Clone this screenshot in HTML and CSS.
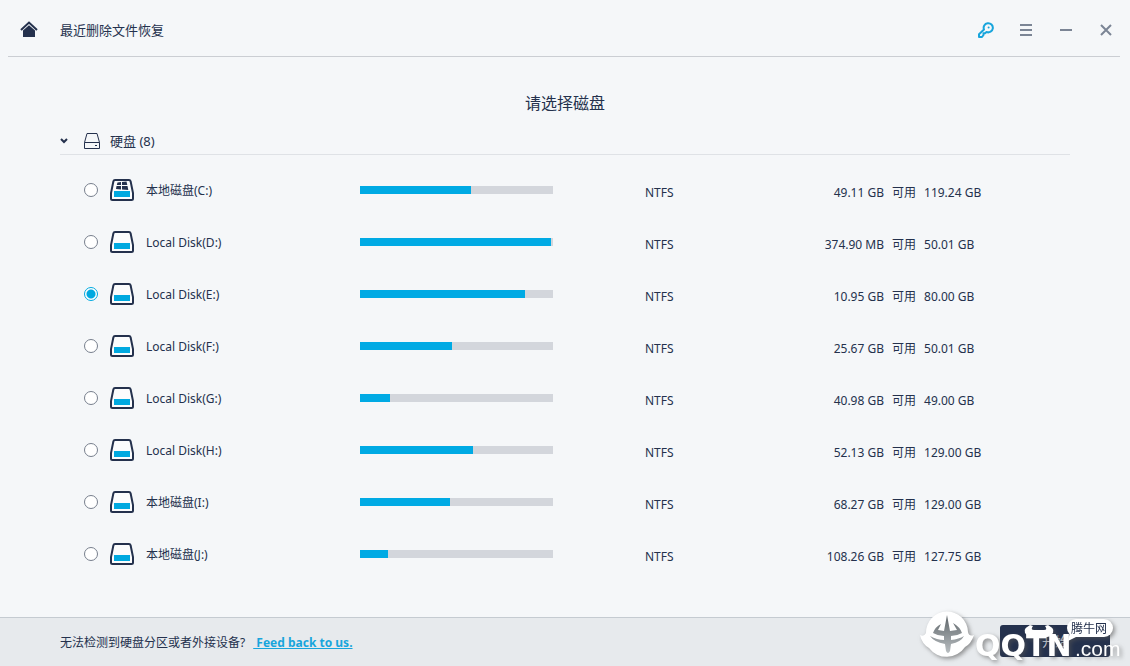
FILE: index.html
```
<!DOCTYPE html>
<html lang="zh-CN">
<head>
<meta charset="utf-8">
<title>最近删除文件恢复</title>
<link rel="stylesheet" href="styles.css">
</head>
<body>
<svg class="defs" aria-hidden="true">
  <symbol id="disk" viewBox="0 0 24 22">
    <path d="M5 1h14q1.300 0 1.600 1.200L23 14v5.500q0 1.500-1.500 1.500h-19Q1 21 1 19.500V14L3.400 2.200Q3.700 1 5 1z" fill="#fbfcfd" stroke="#24314d" stroke-width="2"/>
    <path d="M4 12h16v6H4z" fill="#00a9e0"/>
  </symbol>
</svg>
<div class="window">
  <header class="titlebar">
    <button class="tool home" aria-label="主页"><svg width="18" height="18" viewBox="0 0 18 18"><path d="M1 9 9 1.500l8 7.500" fill="none" stroke="#24314d" stroke-width="2"/><path d="M3 9.500 9 4.300 15 9.500V16H3z" fill="#24314d"/></svg></button>
    <h1 class="title">最近删除文件恢复</h1>
    <nav class="tools">
      <button class="tool" aria-label="注册"><svg width="16" height="16" viewBox="0 0 16 16" fill="none" stroke="#18a5dc" stroke-width="2"><path d="M6 7.500A4.600 4.600 0 1 1 8.500 10L7 11.200H5.500V13L4 15H1v-2.800z" stroke-linejoin="round"/><circle cx="10.600" cy="5.400" r="1" fill="#18a5dc" stroke="none"/></svg></button>
      <button class="tool" aria-label="菜单"><svg width="12" height="12" viewBox="0 0 12 12"><path d="M0 1h12M0 6h12M0 11h12" stroke="#7b8595" stroke-width="2"/></svg></button>
      <button class="tool" aria-label="最小化"><svg width="12" height="12" viewBox="0 0 12 12"><path d="M0 6h12" stroke="#7b8595" stroke-width="2"/></svg></button>
      <button class="tool" aria-label="关闭"><svg width="12" height="12" viewBox="0 0 12 12"><path d="M1 1l10 10M11 1 1 11" stroke="#7b8595" stroke-width="2"/></svg></button>
    </nav>
  </header>

  <main class="content">
    <h2 class="prompt">请选择磁盘</h2>
    <button class="group">
      <svg class="chevron" width="8" height="6" viewBox="0 0 8 6"><path d="M1 1l3 3 3-3" fill="none" stroke="#24314d" stroke-width="2"/></svg>
      <svg width="16" height="16" viewBox="0 0 16 16" fill="none" stroke="#24314d"><path d="M3 .5h10l2.500 9v6H.5v-6zM.5 9.500h15M11 12.500h2"/></svg>
      <span>硬盘 (8)</span>
    </button>
    <table class="disks">
      <colgroup><col class="col-name"><col class="col-usage"><col class="col-type"><col class="col-free"><col></colgroup>
      <tbody>
      <tr><td><label class="disk"><input type="radio" name="disk"><svg class="drive" viewBox="0 0 24 22"><use href="#disk"/><path d="M7.500 3.500l3.500-.5V6H6.800zM12 2.900l4.500-.5.8 3.600H12zM6.500 7H11v3.500l-5-.5zM12 7h5.500l.8 4L12 10.500z" fill="#24314d"/></svg><span class="label">本地磁盘(C:)</span></label></td><td><div class="bar"><div class="used" style="width:57.5%"></div></div></td><td class="num">NTFS</td><td class="num free">49.11 GB</td><td class="num"><span class="word">可用</span>119.24 GB</td></tr>
      <tr><td><label class="disk"><input type="radio" name="disk"><svg class="drive"><use href="#disk"/></svg><span class="label">Local Disk(D:)</span></label></td><td><div class="bar"><div class="used" style="width:99%"></div></div></td><td class="num">NTFS</td><td class="num free">374.90 MB</td><td class="num"><span class="word">可用</span>50.01 GB</td></tr>
      <tr><td><label class="disk"><input type="radio" name="disk" checked><svg class="drive"><use href="#disk"/></svg><span class="label">Local Disk(E:)</span></label></td><td><div class="bar"><div class="used" style="width:85.5%"></div></div></td><td class="num">NTFS</td><td class="num free">10.95 GB</td><td class="num"><span class="word">可用</span>80.00 GB</td></tr>
      <tr><td><label class="disk"><input type="radio" name="disk"><svg class="drive"><use href="#disk"/></svg><span class="label">Local Disk(F:)</span></label></td><td><div class="bar"><div class="used" style="width:47.7%"></div></div></td><td class="num">NTFS</td><td class="num free">25.67 GB</td><td class="num"><span class="word">可用</span>50.01 GB</td></tr>
      <tr><td><label class="disk"><input type="radio" name="disk"><svg class="drive"><use href="#disk"/></svg><span class="label">Local Disk(G:)</span></label></td><td><div class="bar"><div class="used" style="width:15.5%"></div></div></td><td class="num">NTFS</td><td class="num free">40.98 GB</td><td class="num"><span class="word">可用</span>49.00 GB</td></tr>
      <tr><td><label class="disk"><input type="radio" name="disk"><svg class="drive"><use href="#disk"/></svg><span class="label">Local Disk(H:)</span></label></td><td><div class="bar"><div class="used" style="width:58.5%"></div></div></td><td class="num">NTFS</td><td class="num free">52.13 GB</td><td class="num"><span class="word">可用</span>129.00 GB</td></tr>
      <tr><td><label class="disk"><input type="radio" name="disk"><svg class="drive"><use href="#disk"/></svg><span class="label">本地磁盘(I:)</span></label></td><td><div class="bar"><div class="used" style="width:46.6%"></div></div></td><td class="num">NTFS</td><td class="num free">68.27 GB</td><td class="num"><span class="word">可用</span>129.00 GB</td></tr>
      <tr><td><label class="disk"><input type="radio" name="disk"><svg class="drive"><use href="#disk"/></svg><span class="label">本地磁盘(J:)</span></label></td><td><div class="bar"><div class="used" style="width:14.5%"></div></div></td><td class="num">NTFS</td><td class="num free">108.26 GB</td><td class="num"><span class="word">可用</span>127.75 GB</td></tr>
      </tbody>
    </table>
  </main>

  <footer class="footer">
    <p class="hint">无法检测到硬盘分区或者外接设备?<a class="feedback" href="#">&nbsp;Feed back to us.</a></p>
    <button class="start">开始</button>
    <svg class="mark" width="210" height="58" viewBox="0 0 210 58">
      <defs><linearGradient id="shade" x2="0" y2="1"><stop offset="0" stop-color="#5d6468"/><stop offset="1" stop-color="#b9bec1"/></linearGradient></defs>
      <path fill="#fff" d="M6 25A21 21 0 0 1 48 24Q49 29 54 27Q51 36 45 39A22 22 0 0 1 9 40Q2 36 0 27Q4 29 6 25z"/>
      <path fill="url(#shade)" d="M27 7l3 16 7-1-4-7q7 4 9 10-5 3-11 3v4q8-1 13-4-3 6-13 8l-1 7q-2 4-4 0l-1-7Q14 34 10 28q7 4 14 4v-4q-6 0-11-3 2-6 8-9l-3 6 6 1z"/>
      <path d="M110 17q-9 5-3 10 3 3 12 3t12-3q6-5-3-10l-3 1q3 4-1 4h-10q-4 0-1-4z" fill="#fff"/>
      <rect x="147" y="11" width="46" height="18" rx="9" fill="#fff"/>
      <path d="M150 24l-2 9 10-5z" fill="#fff"/>
      <text class="brand" x="55" y="48">QQTN</text>
      <text class="dotcom" x="155" y="48">.com</text>
      <text class="bubble" x="151" y="25">腾牛网</text>
    </svg>
  </footer>
</div>
</body>
</html>
```
FILE: styles.css
```
* { box-sizing: border-box; }
body {
  margin: 0;
  font: 13px/20px "Noto Sans", "Noto Sans CJK SC", sans-serif;
  color: #24314d;
  background: #f5f7f9;
}
button { padding: 0; border: 0; background: none; color: inherit; font: inherit; cursor: pointer; }
.defs { position: absolute; width: 0; height: 0; }
.window { min-height: 100vh; display: flex; flex-direction: column; }
.titlebar { display: flex; align-items: center; height: 57px; margin: 0 10px 0 8px; padding-top: 4px; border-bottom: 1px solid #cbced3; }
.tool { display: grid; place-items: center; width: 40px; height: 40px; }
.home { margin-right: 11px; margin-left: 1px; }
.title { margin: 0; font-size: 13px; font-weight: 400; }
.tools { display: flex; margin-left: auto; margin-right: -6px; }
.content { flex: 1; padding: 36px 60px 0; }
.prompt { margin: 0 0 14px; font-size: 16px; line-height: 20px; font-weight: 400; text-align: center; }
.group { display: flex; align-items: center; gap: 10px; width: 100%; height: 28px; border-bottom: 1px solid #dfe2e6; }
.chevron { margin-right: 6px; }
.disks { width: 100%; margin-top: 9px; table-layout: fixed; border-collapse: collapse; font-size: 12px; }
.col-name { width: 300px; }
.col-usage { width: 285px; }
.col-type { width: 139px; }
.col-free { width: 100px; }
.disks td { height: 52px; padding: 0; }
.disks .num { padding-top: 6px; }
.disks .free { text-align: right; }
.word { margin: 0 8px; }
.disk { display: flex; align-items: center; padding-left: 24px; }
.disk input { appearance: none; width: 14px; height: 14px; margin: 0; border: 1px solid #777f8d; border-radius: 50%; background: #fff; }
.disk input:checked { border-color: #00a9e0; background: radial-gradient(circle, #00a9e0 4px, #fff 5px); }
.label { padding-top: 2px; }
.drive { width: 24px; height: 22px; margin: 0 12px; }
.bar { width: 193px; height: 8px; background: #d3d6dc; }
.used { height: 100%; background: #00aae4; }
.footer { position: relative; display: flex; align-items: center; justify-content: space-between; height: 49px; padding: 0 20px 0 60px; border-top: 1px solid #c5cbd1; background: #e7eaed; }
.hint { margin: 0; padding-top: 2px; font-size: 12px; }
.feedback { margin-left: 8px; color: #18a5dc; font-weight: 700; }
.start { width: 110px; height: 32px; margin-bottom: 2px; border-radius: 3px; background: #24314d; color: #c3c9d2; }
.mark { position: absolute; right: 0; bottom: 0; filter: drop-shadow(2px 2px 2px #5559); pointer-events: none; }
.brand { font: 700 30px "DejaVu Sans", sans-serif; fill: #fff; }
.dotcom { font: 21px "Liberation Sans", sans-serif; fill: #fff; }
.bubble { font: 12px "Noto Sans CJK SC", sans-serif; fill: #24314d; }
```
